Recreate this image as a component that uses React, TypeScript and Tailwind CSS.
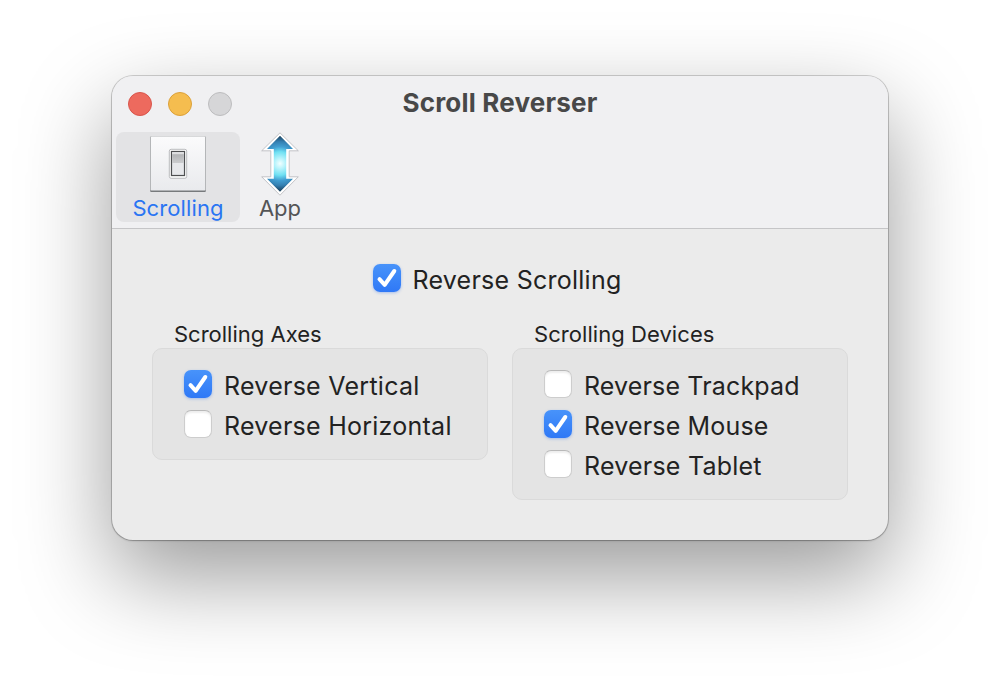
import { useState } from "react";

function Checkbox({ label, initial, spacing }: { label: string; initial: boolean; spacing: string }) {
  const [checked, setChecked] = useState(initial);
  return (
    <button
      type="button"
      role="checkbox"
      aria-checked={checked}
      onClick={() => setChecked(!checked)}
      className="flex h-10 items-start gap-3 text-left"
    >
      {checked ? (
        <span className="mt-[6px] block size-7 shrink-0 rounded-[7px] bg-linear-to-b from-[#4893fa] to-[#2f78f6] shadow-[0_1px_3px_rgba(40,110,240,0.35)]">
          <svg viewBox="0 0 28 28" className="size-7" fill="none">
            <path d="M6.5 15.2 L11.7 20.8 L21.3 7" stroke="white" strokeWidth="4" strokeLinecap="round" strokeLinejoin="round" />
          </svg>
        </span>
      ) : (
        <span className="mt-[6px] block size-7 shrink-0 rounded-[7px] border border-[#cdcdcd] border-t-[#b9b9b9] bg-white shadow-[inset_0_2px_2px_rgba(0,0,0,0.07)]" />
      )}
      <span className={`whitespace-nowrap pt-[2px] text-[25px] leading-10 ${spacing}`}>{label}</span>
    </button>
  );
}

function SwitchIcon() {
  return (
    <svg viewBox="0 0 64 64" className="size-16">
      <defs>
        <linearGradient id="plate" x1="0" y1="0" x2="0" y2="1">
          <stop offset="0" stopColor="#fbfbfc" />
          <stop offset="1" stopColor="#e9eaed" />
        </linearGradient>
        <linearGradient id="rocker" x1="0" y1="0" x2="0" y2="1">
          <stop offset="0" stopColor="#b2b3b5" />
          <stop offset="1" stopColor="#cbccce" />
        </linearGradient>
      </defs>
      <rect x="4" y="4" width="56" height="56" rx="1.5" fill="#b4b6b8" />
      <rect x="4.3" y="58" width="55.4" height="2" rx="1" fill="#777a7c" />
      <rect x="5" y="4.6" width="54" height="53.9" rx="0.5" fill="url(#plate)" />
      <rect x="23.3" y="17.3" width="17.4" height="29" rx="1.8" fill="#fafafa" stroke="#b4b6b8" strokeWidth="0.9" />
      <rect x="25.5" y="19.5" width="13" height="24" fill="#e7e8eb" stroke="#4e4f51" strokeWidth="1.2" />
      <rect x="26.2" y="20.2" width="11.6" height="2.2" fill="#dedee0" />
      <rect x="26.2" y="22.2" width="11.6" height="8.8" fill="url(#rocker)" />
    </svg>
  );
}

function ArrowIcon() {
  return (
    <svg viewBox="0 0 64 64" className="size-16">
      <defs>
        <radialGradient id="glow" gradientUnits="userSpaceOnUse" cx="32" cy="31.5" r="28">
          <stop offset="0" stopColor="#f2ffff" />
          <stop offset="0.2" stopColor="#b3f2fb" />
          <stop offset="0.42" stopColor="#6fe0f2" />
          <stop offset="0.6" stopColor="#429fd2" />
          <stop offset="0.78" stopColor="#3580b2" />
          <stop offset="1" stopColor="#1b3e58" />
        </radialGradient>
      </defs>
      <path
        d="M32 0.8 L50.3 18.8 H41.2 V44.8 H50.3 L32 63.2 L13.7 44.8 H22.8 V18.8 H13.7 Z"
        fill="white"
        stroke="#b6b6ba"
        strokeWidth="0.8"
      />
      <path d="M32 3.7 L45 17.1 H38.2 V46.7 H45 L32 59.7 L19 46.7 H25.8 V17.1 H19 Z" fill="url(#glow)" />
    </svg>
  );
}

export default function App() {
  return (
    <div className="flex h-[688px] w-[1000px] items-start justify-center overflow-hidden bg-white pt-[76px] font-['Inter','Liberation_Sans',sans-serif] text-[#222222]">
      <main className="h-[464px] w-[776px] overflow-hidden rounded-[21px] bg-[#ebebeb] shadow-[0_0_0_1px_rgba(0,0,0,0.17),0_1px_2px_rgba(0,0,0,0.2),0_36px_90px_rgba(0,0,0,0.4)]">
        <header className="h-[153px] border-b border-[#c5c5c7] bg-[#f0f0f2]">
          <div className="grid h-14 grid-cols-[1fr_auto_1fr] items-center px-4">
            <div className="flex gap-4">
              <span className="size-6 rounded-full border border-[#d8554c] bg-[#ed6a5e]" />
              <span className="size-6 rounded-full border border-[#dba03a] bg-[#f5bd4f]" />
              <span className="size-6 rounded-full border border-[#bcbcbe] bg-[#d6d6d8]" />
            </div>
            <h1 className="whitespace-nowrap pb-[2px] text-[26px] leading-[52px] font-bold tracking-[0.2px] text-[#484848]">Scroll Reverser</h1>
          </div>
          <nav className="flex pl-1">
            <button type="button" className="flex h-[90px] w-[124px] flex-col items-center rounded-lg bg-[#e3e3e5] text-[#2a75f3]">
              <SwitchIcon />
              <span className="text-[22px] leading-6 tracking-[0.1px]">Scrolling</span>
            </button>
            <button type="button" className="flex h-[90px] w-20 flex-col items-center text-[#545456]">
              <ArrowIcon />
              <span className="text-[22px] leading-6">App</span>
            </button>
          </nav>
        </header>

        <div className="flex justify-center pt-[29px] pr-[6px]">
          <Checkbox label="Reverse Scrolling" initial={true} spacing="tracking-[0.25px]" />
        </div>

        <div className="flex items-start gap-6 px-10 pt-5">
          <section className="w-[336px]">
            <h2 className="h-[30px] pl-[22px] text-[22px] leading-8">Scrolling Axes</h2>
            <div className="h-[112px] rounded-[10px] border border-[#dadada] bg-[#e4e4e4] pt-[15px] pl-[31px]">
              <Checkbox label="Reverse Vertical" initial={true} spacing="tracking-[0.26px]" />
              <Checkbox label="Reverse Horizontal" initial={false} spacing="tracking-[0.25px]" />
            </div>
          </section>
          <section className="w-[336px]">
            <h2 className="h-[30px] pl-[22px] text-[22px] leading-8 tracking-[0.06px]">Scrolling Devices</h2>
            <div className="h-[152px] rounded-[10px] border border-[#dadada] bg-[#e4e4e4] pt-[15px] pl-[31px]">
              <Checkbox label="Reverse Trackpad" initial={false} spacing="tracking-[0.15px]" />
              <Checkbox label="Reverse Mouse" initial={true} spacing="tracking-[0.18px]" />
              <Checkbox label="Reverse Tablet" initial={false} spacing="tracking-[0.22px]" />
            </div>
          </section>
        </div>
      </main>
    </div>
  );
}
